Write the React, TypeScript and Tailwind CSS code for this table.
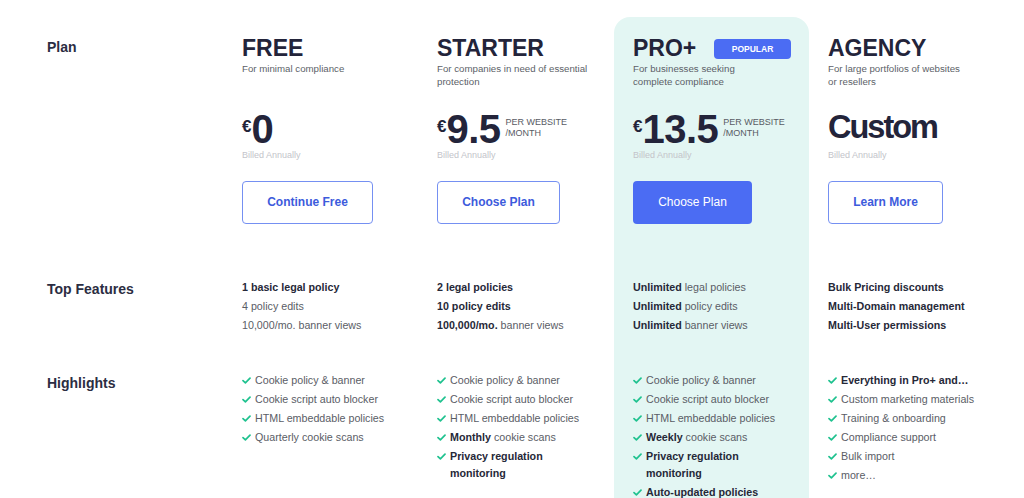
import type { ReactNode } from 'react'

type Plan = {
  name: string
  subtitle: string
  price: string
  perSite?: boolean
  cta: string
  ctaWidth: string
  popular?: boolean
  features: ReactNode[]
  highlights: ReactNode[]
}

const B = ({ children }: { children: ReactNode }) => (
  <span className="font-bold text-[#262838]">{children}</span>
)

const base = ['Cookie policy & banner', 'Cookie script auto blocker', 'HTML embeddable policies']

const plans: Plan[] = [
  {
    name: 'FREE',
    subtitle: 'For minimal compliance',
    price: '0',
    cta: 'Continue Free',
    ctaWidth: 'w-[131px]',
    features: [<B>1 basic legal policy</B>, '4 policy edits', '10,000/mo. banner views'],
    highlights: [...base, 'Quarterly cookie scans'],
  },
  {
    name: 'STARTER',
    subtitle: 'For companies in need of essential\nprotection',
    price: '9.5',
    perSite: true,
    cta: 'Choose Plan',
    ctaWidth: 'w-[123px]',
    features: [<B>2 legal policies</B>, <B>10 policy edits</B>, <><B>100,000/mo.</B> banner views</>],
    highlights: [...base, <><B>Monthly</B> cookie scans</>, <B>Privacy regulation monitoring</B>],
  },
  {
    name: 'PRO+',
    subtitle: 'For businesses seeking\ncomplete compliance',
    price: '13.5',
    perSite: true,
    cta: 'Choose Plan',
    ctaWidth: 'w-[119px]',
    popular: true,
    features: [
      <><B>Unlimited</B> legal policies</>,
      <><B>Unlimited</B> policy edits</>,
      <><B>Unlimited</B> banner views</>,
    ],
    highlights: [
      ...base,
      <><B>Weekly</B> cookie scans</>,
      <B>Privacy regulation monitoring</B>,
      <B>Auto-updated policies</B>,
    ],
  },
  {
    name: 'AGENCY',
    subtitle: 'For large portfolios of websites\nor resellers',
    price: 'Custom',
    cta: 'Learn More',
    ctaWidth: 'w-[115px]',
    features: [<B>Bulk Pricing discounts</B>, <B>Multi-Domain management</B>, <B>Multi-User permissions</B>],
    highlights: [
      <B>Everything in Pro+ and…</B>,
      'Custom marketing materials',
      'Training & onboarding',
      'Compliance support',
      'Bulk import',
      'more…',
    ],
  },
]

function Check() {
  return (
    <svg width="9" height="7" viewBox="0 0 9 7" className="flex-shrink-0 mt-[5px]">
      <path d="M1 3.6 L3.4 5.8 L8 1.2" fill="none" stroke="#1fc28f" strokeWidth="1.7" strokeLinecap="round" strokeLinejoin="round" />
    </svg>
  )
}

function PlanColumn({ plan }: { plan: Plan }) {
  const pro = plan.popular
  return (
    <div className={`pl-[19px] pr-3 pb-8 ${pro ? 'bg-[#e3f6f3] rounded-t-[16px]' : ''}`}>
      {/* Header */}
      <div className="h-[261px] pt-[20px]">
        <div className="flex items-start justify-between pr-[6px]">
          <h2 className="text-[23px] leading-[23px] font-bold text-[#23243a]">{plan.name}</h2>
          {pro && (
            <span className="mt-[2px] w-[77px] h-[20px] flex items-center justify-center rounded-[4px] bg-[#4b6cf3] text-white text-[8.5px] font-bold">
              POPULAR
            </span>
          )}
        </div>
        <p className="mt-[1.5px] h-[47px] whitespace-pre-line text-[9.7px] leading-[13px] text-[#5c5f68]">{plan.subtitle}</p>

        {plan.price === 'Custom' ? (
          <div className="h-[40px] flex items-start">
            <span className="text-[32.5px] leading-[36px] font-bold tracking-[-2px] text-[#23243a]">Custom</span>
          </div>
        ) : (
          <div className="h-[40px] flex items-start">
            <span className="mt-[9px] text-[17px] leading-[17px] font-bold text-[#23243a]">€</span>
            <span className="text-[40px] leading-[40px] font-bold tracking-[-0.5px] text-[#23243a]">{plan.price}</span>
            {plan.perSite && (
              <span className="ml-[5px] mt-[8px] text-[9px] leading-[11.5px] text-[#585b64]">
                PER WEBSITE
                <br />
                /MONTH
              </span>
            )}
          </div>
        )}
        <p className="text-[9px] leading-[12px] text-[#c3c4ca]">Billed Annually</p>

        <button
          className={`mt-[20px] h-[43px] ${plan.ctaWidth} rounded-[4px] text-[12px] ${
            pro
              ? 'bg-[#4b6cf3] text-white font-normal'
              : 'border border-[#7590f2] text-[#3d5bdc] font-bold bg-white'
          }`}
        >
          {plan.cta}
        </button>
      </div>

      {/* Top features */}
      <div className="h-[94px]">
        {plan.features.map((f, i) => (
          <p key={i} className="text-[10.7px] leading-[19px] text-[#5a5d66]">{f}</p>
        ))}
      </div>

      {/* Highlights */}
      <ul className="flex flex-col gap-[2px] w-[156px]">
        {plan.highlights.map((h, i) => (
          <li key={i} className="flex gap-[4px] text-[10.7px] leading-[17px] text-[#5a5d66]">
            <Check />
            <span>{h}</span>
          </li>
        ))}
      </ul>
    </div>
  )
}

export default function App() {
  return (
    <div className="bg-white min-h-[498px] pt-[17px] font-['Liberation_Sans',Arial,sans-serif]">
      <div className="grid grid-cols-[223px_195px_196px_195px_195px]">
        <div className="pl-[47px] text-[14px] leading-[20px] font-bold text-[#2b2d42]">
          <div className="h-[261px] pt-[19.5px]">Plan</div>
          <div className="h-[94px] pt-[0.5px]">Top Features</div>
          <div className="pt-[0.5px]">Highlights</div>
        </div>
        {plans.map(p => (
          <PlanColumn key={p.name} plan={p} />
        ))}
      </div>
    </div>
  )
}
